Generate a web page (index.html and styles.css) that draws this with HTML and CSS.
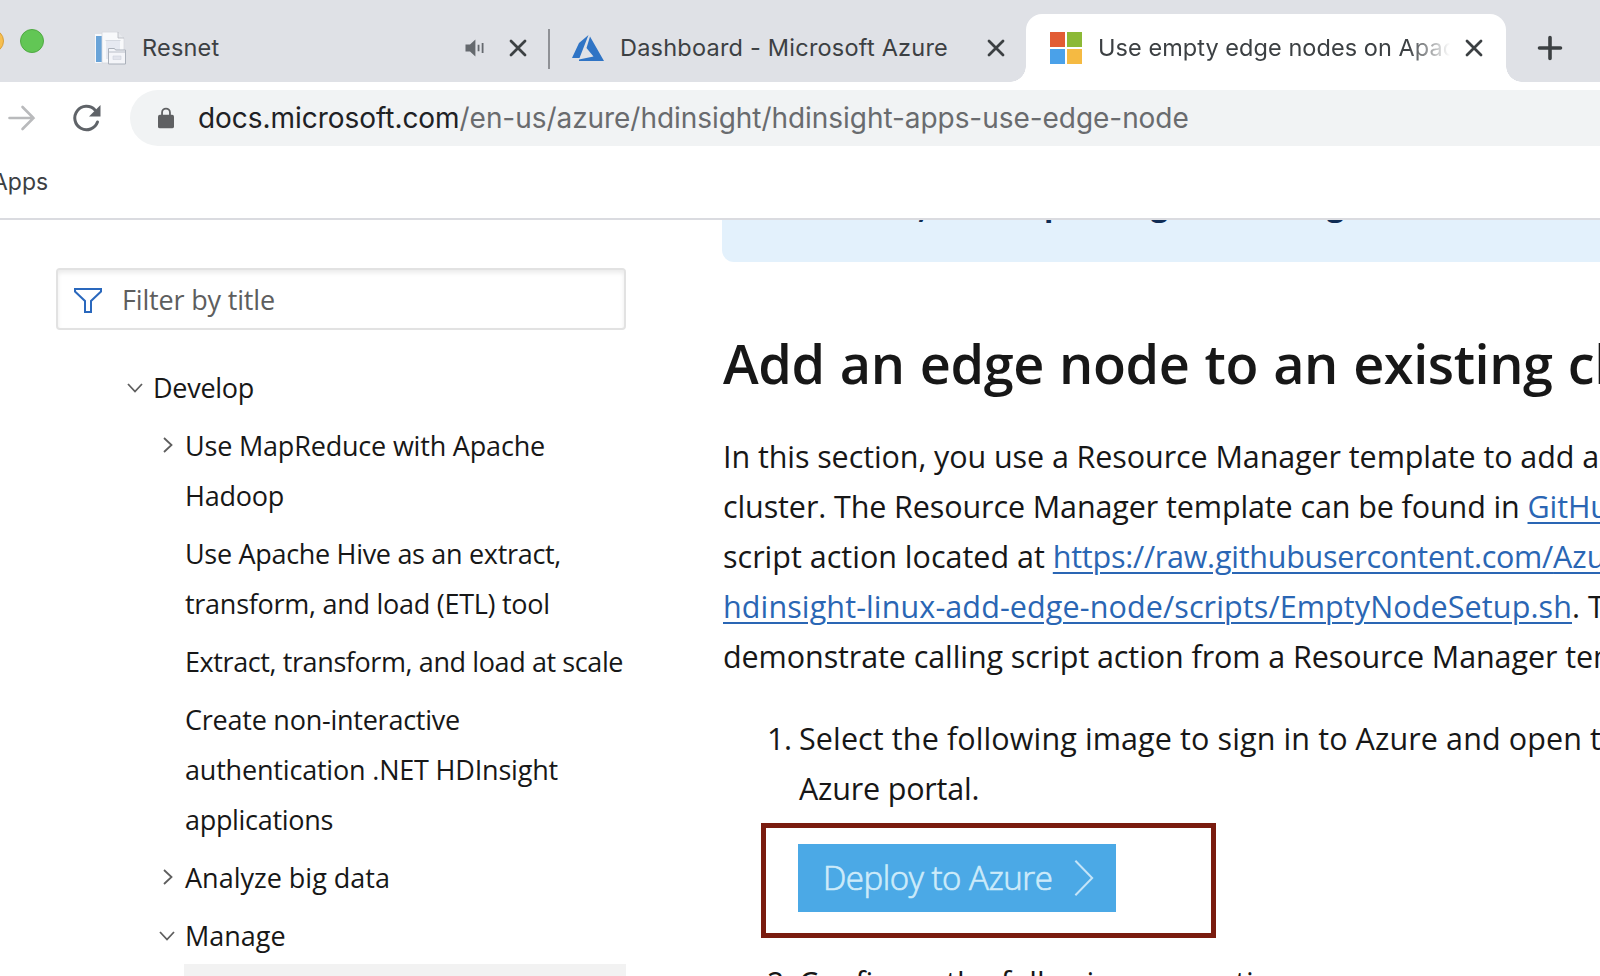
FILE: index.html
```html
<!DOCTYPE html>
<html lang="en">
<head>
<meta charset="utf-8">
<title>Use empty edge nodes on Apache Hadoop clusters</title>
<link rel="stylesheet" href="styles.css">
</head>
<body>
<header class="tabs">
  <div class="lights"><i class="light amber"></i><i class="light green"></i></div>
  <div class="tab tab-first">
    <svg class="fav-doc" viewBox="0 0 32 34"><path d="M1 3h8v29H1z" fill="#f6f8fb"/><path d="M2 5h6v26H2z" fill="#69a3d8"/><path d="M8 1h16l6 6v25H8z" fill="#f8f9fb" stroke="#d5d8de" stroke-width=".8"/><path d="M24 1v6h6" fill="#e6e8ec" stroke="#b4b8bf" stroke-width=".8"/><path d="M12 10h14v18H12z" fill="#e6e9f1"/><path d="M11.500 9.500h15" stroke="#d5d9e1"/><path d="M14.500 17.500h6l1 1.500h10v14h-17z" fill="#f4f5f9" stroke="#aab0ba"/><path d="M15 21h16" stroke="#b9bec8"/><path d="M19 25h8v3.500h-8z" fill="#e2e4ec" stroke="#cfd2db" stroke-width=".6"/></svg>
    <span class="tab-title resnet">Resnet</span>
    <svg class="speaker" viewBox="0 0 20 20"><path d="M0 6h5l6-5.500v19L5 14H0z" fill="#65696e"/><path d="M14.500 6.500v7M19 4.500v11" stroke="#65696e" stroke-width="2"/></svg>
    <svg class="x" viewBox="0 0 18 18"><path d="M2 2l14 14M16 2L2 16"/></svg>
  </div>
  <i class="divider"></i>
  <div class="tab tab-second">
    <svg class="fav-azure" viewBox="0 0 32 26"><path d="M16.500 0L7 8 0 23h7.500zM18 1.500L14.500 13l7 8.500L7 24.500V26h25z" fill="#2f74c5"/></svg>
    <span class="tab-title dash">Dashboard - Microsoft Azure</span>
    <svg class="x" viewBox="0 0 18 18"><path d="M2 2l14 14M16 2L2 16"/></svg>
  </div>
  <div class="tab active">
    <svg class="fav-ms" viewBox="0 0 32 32"><path d="M0 0h15v15H0z" fill="#e25c34"/><path d="M17 0h15v15H17z" fill="#8cb936"/><path d="M0 17h15v15H0z" fill="#4aa1e9"/><path d="M17 17h15v15H17z" fill="#f5ba42"/></svg>
    <span class="tab-title edge">Use empty edge nodes on Apac</span>
    <svg class="x" viewBox="0 0 18 18"><path d="M2 2l14 14M16 2L2 16"/></svg>
  </div>
  <svg class="plus" viewBox="0 0 24 24"><path d="M12 1.500v21M1.500 12h21"/></svg>
</header>
<nav class="toolbar">
  <svg class="forward" viewBox="0 0 28 26"><path d="M1.500 13h24M14.500 2l11 11-11 11"/></svg>
  <svg class="reload" viewBox="0 0 28 28"><path d="M24.500 18A11.700 11.700 0 1 1 22 6" fill="none" stroke="#5f6368" stroke-width="3" stroke-linecap="round"/><path d="M27.500 1v11.500H16z" fill="#5f6368"/></svg>
  <div class="address">
    <svg class="lock" viewBox="0 0 17 22"><rect y="7.500" width="17" height="14.500" rx="2" fill="#5f6062"/><path d="M4.300 8V5.200a4.200 4.200 0 0 1 8.400 0V8" fill="none" stroke="#5f6062" stroke-width="1.900"/></svg>
    <span class="url"><b>docs.microsoft.com</b><span>/en-us/azure/hdinsight/hdinsight-apps-use-edge-node</span></span>
  </div>
</nav>
<div class="bookmarks"><span class="apps">Apps</span></div>
<main class="page">
  <aside class="side">
    <div class="filter"><svg viewBox="0 0 28 25"><path d="M1 1h26v2.500L17 13v11h-6V13L1 3.500z"/></svg><span>Filter by title</span></div>
    <ul class="tree">
      <li class="top"><svg class="down" viewBox="0 0 16 10"><path d="M1 1l7 7.500L15 1"/></svg><span class="t28">Develop</span></li>
      <li><svg class="right" viewBox="0 0 10 16"><path d="M1 1l7.500 7L1 15"/></svg><span class="t19">Use MapReduce with Apache</span><br><span class="t24">Hadoop</span></li>
      <li><span class="t31">Use Apache Hive as an extract,</span><br><span class="t28">transform, and load (ETL) tool</span></li>
      <li><span class="t40">Extract, transform, and load at scale</span></li>
      <li><span class="t24">Create non-interactive</span><br><span class="t19">authentication .NET HDInsight</span><br><span class="t31">applications</span></li>
      <li><svg class="right" viewBox="0 0 10 16"><path d="M1 1l7.500 7L1 15"/></svg><span>Analyze big data</span></li>
      <li><svg class="down" viewBox="0 0 16 10"><path d="M1 1l7 7.500L15 1"/></svg><span>Manage</span></li>
    </ul>
    <div class="selected"></div>
  </aside>
  <article class="doc">
    <div class="note"><span>,</span><span>p</span><span>g</span><span>g</span></div>
    <h2>Add an edge node to an existing cluster</h2>
    <p><span class="t10">In this section, you use a Resource Manager template to add an</span><br>
    <span class="t12">cluster. The Resource Manager template can be found in <a>GitHub</a></span><br>
    script action located at <a><span class="t25">https://raw.githubusercontent.com/</span>Azure</a><br>
    <span class="wide"><a>hdinsight-linux-add-edge-node/scripts/EmptyNodeSetup.sh</a></span>. The<br>
    <span class="t10">demonstrate calling script action from a Resource Manager template</span></p>
    <ol>
      <li><span class="num">1.</span><div><span class="wide">Select the following image to sign in to Azure and open the</span><br><span class="t19">Azure portal.</span></div></li>
    </ol>
    <div class="frame"><div class="deploy"><span>Deploy to Azure</span><svg viewBox="0 0 22 40"><path d="M1.500 1l18.500 19L1.500 39"/></svg></div></div>
    <ol class="second"><li><span class="num">2.</span><div>Configure the following properties:</div></li></ol>
  </article>
</main>
</body>
</html>
```

FILE: styles.css
```css
* { box-sizing: border-box; }
html, body { margin: 0; height: 976px; overflow: hidden; background: #fff; }
body { display: flex; flex-direction: column; width: 1600px; font-family: "Open Sans", "Noto Sans", sans-serif; color: #171717; }
svg { display: block; flex: none; fill: none; overflow: visible; }

/* letter tracking */
.t10 { letter-spacing: -.09px; }
.t12 { letter-spacing: -.11px; }
.t19 { letter-spacing: -.19px; }
.t24 { letter-spacing: -.24px; }
.t25 { letter-spacing: -.25px; }
.t28 { letter-spacing: -.27px; }
.t31 { letter-spacing: -.31px; }
.t40 { letter-spacing: -.4px; }
.wide { letter-spacing: .11px; }

/* browser tabs */
.tabs { display: flex; height: 82px; padding-top: 14px; background: #dfe1e6; font-family: Inter, sans-serif; font-size: 23.5px; color: #3c4043; flex: none; }
.lights { position: relative; width: 94px; flex: none; }
.light { position: absolute; top: 15px; width: 24px; height: 24px; border-radius: 50%; }
.amber { left: -20px; background: #f6be4f; border: 1px solid #d8a03c; }
.green { left: 20px; background: #62c655; border: 1px solid #50a943; }
.tab { display: flex; align-items: center; height: 68px; white-space: nowrap; flex: none; padding-bottom: 1px; }
.tab-first { width: 454px; }
.fav-doc { width: 32px; height: 34px; }
.resnet { margin-left: 16px; width: 323px; letter-spacing: .2px; }
.speaker { width: 19px; height: 18px; margin-right: 25px; }
.x { width: 18px; height: 18px; }
.x path { stroke: #3c4043; stroke-width: 2.8; stroke-linecap: round; }
.divider { width: 2px; height: 40px; margin-top: 15px; background: #8f9196; flex: none; }
.tab-second { width: 476px; padding-left: 22px; }
.fav-azure { width: 32px; height: 26px; }
.dash { margin-left: 16px; width: 367px; letter-spacing: .22px; }
.active { position: relative; width: 480px; padding-left: 24px; background: #fff; border-radius: 16px 16px 0 0; }
.active::before, .active::after { content: ""; position: absolute; bottom: 0; width: 16px; height: 16px; }
.active::before { left: -16px; background: radial-gradient(circle at 0 0, transparent 15.500px, #fff 16px); }
.active::after { right: -16px; background: radial-gradient(circle at 100% 0, transparent 15.500px, #fff 16px); }
.fav-ms { width: 32px; height: 32px; }
.edge { margin-left: 16px; width: 352px; overflow: hidden; margin-right: 15px; letter-spacing: .05px; -webkit-mask-image: linear-gradient(90deg, #000 310px, transparent 352px); }
.plus { width: 24px; height: 24px; margin: 22px 0 0 32px; }
.plus path { stroke: #3c4043; stroke-width: 3.600; stroke-linecap: round; }

/* toolbar and bookmarks */
.toolbar { display: flex; align-items: center; height: 72px; flex: none; font-family: Inter, sans-serif; }
.forward { width: 28px; height: 26px; margin-left: 8px; }
.forward path { stroke: #b9babc; stroke-width: 2.600; stroke-linecap: round; }
.reload { width: 28px; height: 28px; margin-left: 37px; }
.address { display: flex; align-items: center; width: 1540px; flex: none; height: 56px; margin-left: 29px; padding-left: 28px; border-radius: 28px; background: #f1f3f4; font-size: 28px; letter-spacing: -.05px; color: #696b6e; white-space: nowrap; }
.lock { width: 16px; height: 22px; margin-right: 24px; margin-bottom: 0; }
.url b { font-weight: 400; color: #202124; }
.bookmarks { height: 66px; flex: none; border-bottom: 2px solid #dadbe0; font: 23px Inter, sans-serif; color: #3c4043; }
.apps { display: block; width: max-content; margin-left: -8px; line-height: 56px; }

.page { display: flex; flex: 1; min-height: 0; overflow: hidden; }

/* table of contents */
.side { width: 722px; padding: 48px 0 0 56px; flex: none; font-size: 27px; line-height: 50px; white-space: nowrap; }
.filter { display: flex; align-items: center; width: 570px; height: 62px; padding: 2px 0 0 16px; border: 2px solid #e2e2e2; border-radius: 4px; box-shadow: inset 0 3px 4px #ececec; color: #5e5e5e; letter-spacing: -.17px; }
.filter svg { width: 28px; height: 25px; margin-right: 20px; }
.filter path { stroke: #2a68bd; stroke-width: 2; }
.tree { list-style: none; margin: 33px 0 0; padding: 0 0 0 129px; }
.tree li { position: relative; margin-bottom: 8px; }
.tree .top { margin-left: -32px; }
.tree svg { position: absolute; }
.tree path { stroke: #5e5e5e; stroke-width: 1.800; }
.down { width: 16px; height: 10px; left: -26px; top: 20px; }
.right { width: 10px; height: 16px; left: -22px; top: 16px; }
.selected { width: 442px; height: 40px; margin: -5px 0 0 128px; background: #f2f2f2; }

/* article */
.doc { width: 1000px; flex: none; font-size: 30.500px; line-height: 50px; white-space: nowrap; }
.note { position: relative; height: 42px; border-radius: 0 0 0 12px; background: #e3f1fc; overflow: hidden; color: #0f2c54; font-weight: 700; }
.note span { position: absolute; top: -41px; }
.note span:nth-child(1) { left: 196px; top: -39px; }
.note span:nth-child(2) { left: 322px; }
.note span:nth-child(3) { left: 429px; }
.note span:nth-child(4) { left: 605px; }
h2 { margin: 63px 0 0 1px; font-size: 54px; font-weight: 600; line-height: 76px; letter-spacing: -.43px; word-spacing: 1.6px; }
p { margin: 30px 0 0 1px; }
a { color: #2a66b4; text-decoration: underline; text-decoration-thickness: 2px; text-underline-offset: 4px; }
ol { list-style: none; margin: 32px 0 0; padding: 0; }
ol li { display: flex; }
.num { width: 77px; padding-left: 45px; flex: none; letter-spacing: -.5px; }
.frame { width: 455px; height: 115px; margin: 10px 0 0 39px; padding: 16px 0 0 32px; border: 5px solid #7a1c0f; }
.deploy { display: flex; align-items: center; width: 318px; height: 68px; padding-left: 25px; background: #4ba9e6; color: #cdebfa; font-size: 33px; letter-spacing: -.45px; font-weight: 300; -webkit-text-stroke: .7px #cdebfa; }
.deploy span { width: 251px; }
.deploy svg { width: 20px; height: 38px; }
.deploy path { stroke: #c4e4f8; stroke-width: 2.2; }
.second { margin-top: 19px; }
```
